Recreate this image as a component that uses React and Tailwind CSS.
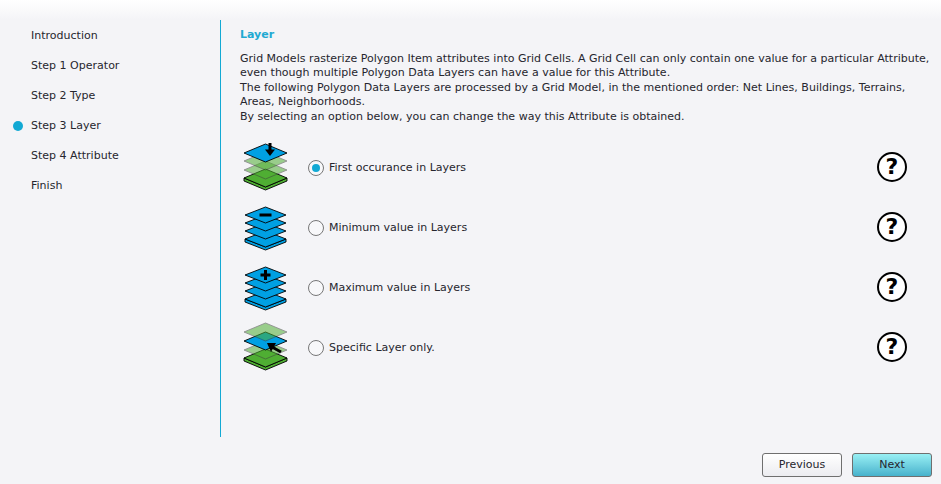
import React from "react";

const STEPS = ["Introduction", "Step 1 Operator", "Step 2 Type", "Step 3 Layer", "Step 4 Attribute", "Finish"];

const BLUE = "#00a0e3";
const GREEN = "#4fae33";

// one slab of the stack, cy is the centre of the top face
const Slab = ({ cy, fill, thick, opacity = 1, stroke = "#000", hw = 21.5, hh = 9 }) => {
  const cx = 23.5;
  const l = cx - hw;
  const r = cx + hw;
  return (
    <g opacity={opacity}>
      {thick && (
        <polygon
          points={`${l},${cy} ${l},${cy + 3} ${cx},${cy + hh + 3} ${r},${cy + 3} ${r},${cy} ${cx},${cy + hh}`}
          fill={fill}
          stroke={stroke}
          strokeWidth="0.9"
          strokeLinejoin="round"
        />
      )}
      <polygon
        points={`${l},${cy} ${cx},${cy - hh} ${r},${cy} ${cx},${cy + hh}`}
        fill={fill}
        stroke={stroke}
        strokeWidth="0.9"
        strokeLinejoin="round"
      />
    </g>
  );
};

const Faded = ({ cy }) => <Slab cy={cy} fill={GREEN} stroke="#3c3c3c" opacity={0.55} />;

const LayerIcon = ({ type }) => (
  <svg width="46" height="50" viewBox="0 0 46 50" className="shrink-0">
    {type === "first" && (
      <>
        <Slab cy={36} fill={GREEN} thick />
        <Faded cy={28} />
        <Faded cy={19} />
        <Slab cy={11} fill={BLUE} />
        <path d="M28 1V9" stroke="#000" strokeWidth="3" />
        <polygon points="23,7.500 33,7.500 28,14" fill="#000" />
      </>
    )}
    {(type === "min" || type === "max") && (
      <>
        <Slab cy={37} fill={BLUE} thick hw={20.5} hh={8} />
        <Slab cy={29} fill={BLUE} hw={20.5} hh={8} />
        <Slab cy={21} fill={BLUE} hw={20.5} hh={8} />
        <Slab cy={13} fill={BLUE} hw={20.5} hh={8} />
        {type === "min" && <path d="M17.500 13H29.500" stroke="#000" strokeWidth="3" />}
        {type === "max" && <path d="M18.500 13H28.500M23.500 8V18" stroke="#000" strokeWidth="3" />}
      </>
    )}
    {type === "specific" && (
      <>
        <Slab cy={36} fill={GREEN} thick />
        <Faded cy={28} />
        <Slab cy={19} fill={BLUE} />
        <Faded cy={10} />
        <path d="M39 30L30 25" stroke="#000" strokeWidth="3" />
        <polygon points="25,21 34,21 29,30" fill="#000" />
      </>
    )}
  </svg>
);

const HelpIcon = () => (
  <div className="flex h-[30px] w-[30px] shrink-0 items-center justify-center rounded-full border-2 border-black bg-white text-[22px] leading-none font-bold text-black">
    ?
  </div>
);

const Radio = ({ checked }) => (
  <div className="flex h-4 w-4 shrink-0 items-center justify-center rounded-full border-[1.5px] border-[#777777] bg-[#f8f8fa]">
    {checked && <div className="h-2 w-2 rounded-full bg-[#12a9d4]" />}
  </div>
);

const OPTIONS = [
  { type: "first", label: "First occurance in Layers", checked: true },
  { type: "min", label: "Minimum value in Layers" },
  { type: "max", label: "Maximum value in Layers" },
  { type: "specific", label: "Specific Layer only." },
];

export default function App() {
  return (
    <div className="relative flex h-[484px] w-[941px] flex-col overflow-hidden bg-[#f4f4f7] font-['DejaVu_Sans',sans-serif] text-[11.02px] text-[#26262e]">
      <div className="absolute inset-x-0 top-0 h-5 bg-gradient-to-b from-white to-[#f4f4f7]" />

      <div className="relative flex h-[437px] pt-5">
        {/* Steps */}
        <div className="w-[220px] shrink-0 pt-px">
          {STEPS.map((step, i) => (
            <div key={step} className="flex h-[30px] items-center">
              <div className="flex w-[31px] justify-start pl-[13px]">
                {i === 3 && <div className="h-[10px] w-[10px] rounded-full bg-[#12a9d4]" />}
              </div>
              <span>{step}</span>
            </div>
          ))}
        </div>

        {/* Content */}
        <div className="flex-1 border-l border-[#12a9d4] pr-[10px] pl-[19px]">
          <div className="flex h-7 items-center pt-[2px] font-bold text-[#1fa9d2]">Layer</div>
          <p className="mt-[4px] leading-[14.4px]">
            Grid Models rasterize Polygon Item attributes into Grid Cells. A Grid Cell can only contain one value for a particular Attribute,
            <br />
            even though multiple Polygon Data Layers can have a value for this Attribute.
            <br />
            The following Polygon Data Layers are processed by a Grid Model, in the mentioned order: Net Lines, Buildings, Terrains,
            <br />
            Areas, Neighborhoods.
            <br />
            By selecting an option below, you can change the way this Attribute is obtained.
          </p>
          <div className="mt-[14px]">
            {OPTIONS.map((opt) => (
              <div key={opt.type} className="flex h-[60px] items-center">
                <div className="mb-[2px] ml-[2px] w-[66px]">
                  <LayerIcon type={opt.type} />
                </div>
                <Radio checked={opt.checked} />
                <span className="ml-[5px] flex-1">{opt.label}</span>
                <div className="mr-[24px] mb-[2px]">
                  <HelpIcon />
                </div>
              </div>
            ))}
          </div>
        </div>
      </div>

      {/* Footer buttons */}
      <div className="relative mt-4 flex justify-end gap-[10px] pr-[9px]">
        <button className="h-6 w-20 rounded-[3px] border border-[#6f6f6f] bg-gradient-to-b from-white to-[#ececf0] text-[#26262e]">
          Previous
        </button>
        <button className="h-6 w-20 rounded-[3px] border border-[#6f6f6f] bg-gradient-to-b from-[#98f0f4] to-[#46b2cc] text-[#26262e]">
          Next
        </button>
      </div>
    </div>
  );
}
